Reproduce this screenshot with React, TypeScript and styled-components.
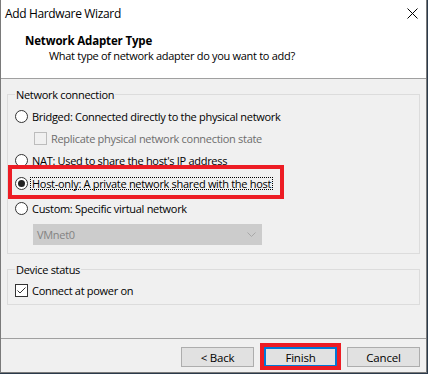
import React from "react";
import styled, {createGlobalStyle} from "styled-components";

const GlobalStyle = createGlobalStyle`
  html, body {
    margin: 0;
    padding: 0;
    background: #2b3a4a;
  }
  body {
    font-family: "Open Sans", "Noto Sans", "Liberation Sans", sans-serif;
    font-size: 11px;
    letter-spacing: -0.3px;
    color: #000;
  }
`;

const Window = styled.div`
  width: 427px;
  height: 373px;
  box-sizing: border-box;
  border: 1px solid #7a7a7a;
  border-top: none;
  background: #f0f0f0;
  display: flex;
  flex-direction: column;
`;

const TitleBar = styled.div`
  height: 30px;
  background: #fff;
  display: flex;
  align-items: center;
  justify-content: space-between;
  padding: 0 8px 4px 4px;
  box-sizing: border-box;
`;

const TitleText = styled.span`
  font-size: 12px;
  letter-spacing: -0.35px;
`;

const Header = styled.div`
  height: 49px;
  box-sizing: border-box;
  background: #fff;
  border-bottom: 1px solid #a0a0a0;
  padding: 3px 0 0 24px;
`;

const HeaderTitle = styled.div`
  font-weight: 700;
  font-size: 11.5px;
  letter-spacing: -0.15px;
  line-height: 15px;
`;

const HeaderSub = styled.div`
  line-height: 15px;
  padding-left: 24px;
`;

const Body = styled.div`
  flex: 1;
  padding: 0 6px;
  display: flex;
  flex-direction: column;
`;

const Group = styled.fieldset<{ $top: number; $bottom: number }>`
  margin: ${p => p.$top}px 0 0;
  padding: 0 0 ${p => p.$bottom}px 7px;
  border: 1px solid #dcdcdc;
  display: flex;
  flex-direction: column;
  align-items: flex-start;
`;

const Legend = styled.legend`
  padding: 0 1px;
  line-height: 15px;
`;

const Row = styled.div<{ $mt?: number; $indent?: number }>`
  height: 22px;
  display: flex;
  align-items: center;
  gap: 2px;
  margin-top: ${p => p.$mt || 0}px;
  margin-left: ${p => p.$indent || 0}px;
`;

const Marked = styled(Row)`
  position: relative;
  &::after {
    content: "";
    position: absolute;
    top: -7px;
    bottom: -5px;
    left: -7px;
    right: -11px;
    border: 4px solid #ed1c24;
    pointer-events: none;
  }
`;

const Radio = styled.span<{ $on?: boolean }>`
  width: 13px;
  height: 13px;
  box-sizing: border-box;
  border-radius: 50%;
  border: 1px solid #333;
  background: #fff;
  display: flex;
  align-items: center;
  justify-content: center;
  &::after {
    content: "";
    width: 7px;
    height: 7px;
    border-radius: 50%;
    background: #222;
    display: ${p => (p.$on ? "block" : "none")};
  }
`;

const Box = styled.span<{ $disabled?: boolean }>`
  width: 13px;
  height: 13px;
  box-sizing: border-box;
  border: 1px solid ${p => (p.$disabled ? "#bcbcbc" : "#333")};
  background: ${p => (p.$disabled ? "#f0f0f0" : "#fff")};
  display: flex;
`;

const Label = styled.span<{ $disabled?: boolean; $focus?: boolean }>`
  color: ${p => (p.$disabled ? "#6d6d6d" : "#000")};
  padding: 0 1px;
  line-height: 11px;
  border: 1px ${p => (p.$focus ? "dotted #000" : "solid transparent")};
`;

const Combo = styled.div`
  width: 229px;
  height: 21px;
  box-sizing: border-box;
  margin: 5px 0 0 18px;
  background: #cccccc;
  border: 1px solid #cccccc;
  color: #838383;
  display: flex;
  align-items: center;
  justify-content: space-between;
  padding: 0 5px 0 3px;
`;

const Spacer = styled.div`
  flex: 1;
`;

const Footer = styled.div`
  height: 34px;
  box-sizing: border-box;
  border-top: 1px solid #a0a0a0;
  display: flex;
  justify-content: flex-end;
  align-items: flex-start;
  gap: 10px;
  padding: 8px 6px 0 0;
`;

const Button = styled.button<{ $default?: boolean }>`
  width: 73px;
  height: 20px;
  box-sizing: border-box;
  background: #e1e1e1;
  border: ${p => (p.$default ? "2px solid #0078d7" : "1px solid #adadad")};
  font-family: inherit;
  font-size: 11.5px;
  letter-spacing: -0.2px;
  color: #000;
  padding: 0;
`;

const MarkedButton = styled(Button)`
  position: relative;
  &::after {
    content: "";
    position: absolute;
    top: -6px;
    bottom: -5px;
    left: -6px;
    right: -6px;
    border: 4px solid #ed1c24;
    pointer-events: none;
  }
`;

function CloseIcon() {
  return (
    <svg width="11" height="11" viewBox="0 0 11 11">
      <path d="M0.5 0.5 L10.5 10.5 M10.5 0.5 L0.5 10.5" stroke="#000" strokeWidth="1" />
    </svg>
  );
}

function Check() {
  return (
    <svg width="11" height="11" viewBox="0 0 11 11">
      <path d="M1.5 5.5 L4 8 L9.5 2.5" stroke="#333" strokeWidth="1" fill="none" />
    </svg>
  );
}

function Chevron() {
  return (
    <svg width="9" height="5" viewBox="0 0 9 5">
      <path d="M0.5 0.5 L4.5 4.5 L8.5 0.5" stroke="#a8a8a8" strokeWidth="1" fill="none" />
    </svg>
  );
}

export default function App() {
  return (
    <>
      <GlobalStyle />
      <Window>
        <TitleBar>
          <TitleText>Add Hardware Wizard</TitleText>
          <CloseIcon />
        </TitleBar>
        <Header>
          <HeaderTitle>Network Adapter Type</HeaderTitle>
          <HeaderSub>What type of network adapter do you want to add?</HeaderSub>
        </Header>
        <Body>
          <Group $top={8} $bottom={8}>
            <Legend>Network connection</Legend>
            <Row $mt={3}>
              <Radio />
              <Label>Bridged: Connected directly to the physical network</Label>
            </Row>
            <Row $indent={19}>
              <Box $disabled />
              <Label $disabled>Replicate physical network connection state</Label>
            </Row>
            <Row>
              <Radio />
              <Label>NAT: Used to share the host's IP address</Label>
            </Row>
            <Marked $mt={1}>
              <Radio $on />
              <Label $focus>Host-only: A private network shared with the host</Label>
            </Marked>
            <Row $mt={3}>
              <Radio />
              <Label>Custom: Specific virtual network</Label>
            </Row>
            <Combo>
              <span>VMnet0</span>
              <Chevron />
            </Combo>
          </Group>
          <Group $top={8} $bottom={3}>
            <Legend>Device status</Legend>
            <Row $mt={2}>
              <Box>
                <Check />
              </Box>
              <Label>Connect at power on</Label>
            </Row>
          </Group>
          <Spacer />
        </Body>
        <Footer>
          <Button>&lt; Back</Button>
          <MarkedButton $default>Finish</MarkedButton>
          <Button>Cancel</Button>
        </Footer>
      </Window>
    </>
  );
}
